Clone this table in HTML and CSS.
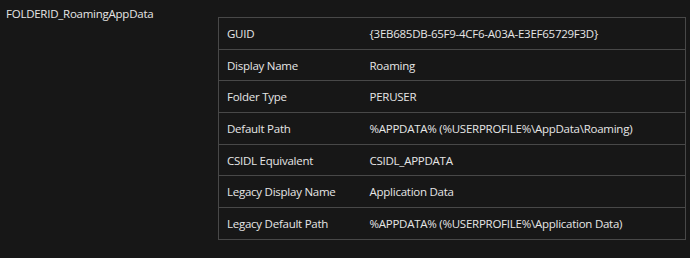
FILE: index.html
```html
<!DOCTYPE html>
<html lang="en">
<head>
    <meta charset="UTF-8">
    <title>FOLDERID_RoamingAppData</title>
    <link rel="stylesheet" href="styles.css">
</head>
<body>
    <div class="folder">
        <h2 class="folder-name">FOLDERID_RoamingAppData</h2>
        <table class="props">
            <tr><td>GUID</td><td>{3EB685DB-65F9-4CF6-A03A-E3EF65729F3D}</td></tr>
            <tr><td>Display Name</td><td>Roaming</td></tr>
            <tr><td>Folder Type</td><td>PERUSER</td></tr>
            <tr><td>Default Path</td><td>%APPDATA% (%USERPROFILE%\AppData\Roaming)</td></tr>
            <tr><td>CSIDL Equivalent</td><td>CSIDL_APPDATA</td></tr>
            <tr><td>Legacy Display Name</td><td>Application Data</td></tr>
            <tr><td>Legacy Default Path</td><td>%APPDATA% (%USERPROFILE%\Application Data)</td></tr>
        </table>
    </div>
</body>
</html>
```

FILE: styles.css
```css
body {
    margin: 0;
    padding: 0;
    background: #171717;
    color: #e6e6e6;
    font-family: 'Open Sans', 'Noto Sans', sans-serif;
    font-size: 11.5px;
    letter-spacing: -0.25px;
}

.folder {
    display: flex;
    align-items: flex-start;
    padding: 5px 0 0 6px;
}

.folder-name {
    width: 212px;
    margin: 0;
    font-size: 11.5px;
    font-weight: normal;
    line-height: 18px;
}

.props {
    width: 468px;
    margin-top: 12px;
    border-collapse: collapse;
    border: 1px solid #484848;
}

.props td {
    height: 31.7px;
    padding: 0 8px;
    border-bottom: 1px solid #484848;
    box-sizing: border-box;
    white-space: nowrap;
}

.props td:first-child {
    width: 143px;
}
```
